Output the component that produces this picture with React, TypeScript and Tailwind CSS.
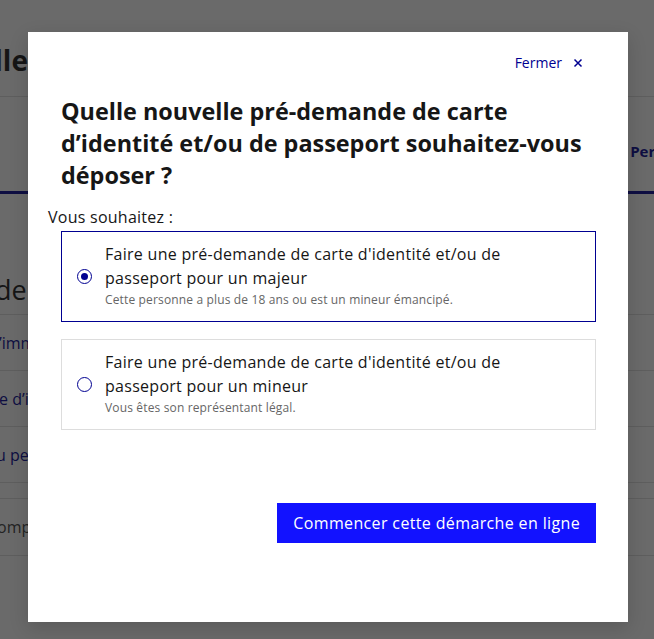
import React from "react";

const font = { fontFamily: '"Open Sans", "Lato", sans-serif' };

function Radio({ checked }: { checked: boolean }) {
  return (
    <span className="flex h-[15px] w-[15px] shrink-0 items-center justify-center rounded-full border border-[#000091] bg-white">
      {checked && <span className="h-[7px] w-[7px] rounded-full bg-[#000091]" />}
    </span>
  );
}

function Option({
  checked,
  line1,
  line2,
  hint,
}: {
  checked: boolean;
  line1: string;
  line2: string;
  hint: string;
}) {
  return (
    <div
      className={`flex items-center gap-[13px] border pl-[15px] pr-4 pt-[10px] pb-[11px] ${
        checked ? "border-[#000091]" : "border-[#dddddd]"
      }`}
    >
      <Radio checked={checked} />
      <div className="flex flex-col">
        <span className="whitespace-nowrap text-[16px] leading-[24px] tracking-[0.28px] text-[#161616]">
          {line1}
          <br />
          {line2}
        </span>
        <span className="whitespace-nowrap text-[12px] leading-[20px] tracking-[0.15px] text-[#666666]">{hint}</span>
      </div>
    </div>
  );
}

export default function App() {
  return (
    <div className="relative h-[639px] w-[654px] overflow-hidden bg-white" style={font}>
      {/* page behind */}
      <div className="flex flex-col">
        <div className="flex h-[97px] items-center border-b border-[#dddddd] pt-[24px]">
          <span className="ml-[-74px] text-[28px] font-bold text-[#161616]">Famille</span>
        </div>
        <div className="flex h-[97px] items-center justify-end border-b-[3px] border-[#000091] pt-[14px]">
          <span className="mr-[-54px] text-[15px] font-bold text-[#000091]">Personnes</span>
        </div>
        <div className="flex h-[120px] items-end pb-[4px]">
          <span className="ml-[-29px] whitespace-nowrap text-[27px] font-medium text-[#161616]">Aide</span>
        </div>
        <div className="flex h-[57px] items-center border-y border-[#dddddd]">
          <span className="ml-[-1px] whitespace-nowrap text-[16px] text-[#000091]">’immatriculation</span>
        </div>
        <div className="flex h-[56px] items-center border-b border-[#dddddd]">
          <span className="ml-[-1px] whitespace-nowrap text-[16px] text-[#000091]">e d’identité</span>
        </div>
        <div className="flex h-[56px] items-center border-b border-[#dddddd]">
          <span className="ml-[-4px] whitespace-nowrap text-[16px] text-[#000091]">u permis</span>
        </div>
        <div className="h-[16px] border-b border-[#dddddd]" />
        <div className="flex h-[57px] items-center border-b border-[#dddddd]">
          <span className="ml-[-3px] whitespace-nowrap text-[16px] text-[#3a3a3a]">ompte</span>
        </div>
      </div>

      {/* overlay */}
      <div className="absolute inset-0 flex justify-center bg-[rgba(22,22,22,0.64)] pt-[32px]">
        <div className="ml-[2px] flex h-[590px] w-[600px] flex-col bg-white shadow-[0_6px_18px_rgba(0,0,0,0.16)]">
          <div className="flex justify-end pr-[44px] pt-[22px]">
            <button className="flex items-center gap-[10px] text-[14px] font-medium leading-[18px] text-[#000091]">
              Fermer
              <svg width="12" height="12" viewBox="0 0 12 12" fill="none">
                <path d="M2.5 2.5 L9.5 9.5 M9.5 2.5 L2.5 9.5" stroke="#000091" strokeWidth="1.5" />
              </svg>
            </button>
          </div>
          <h1 className="mt-[23px] whitespace-nowrap px-[33px] text-[23.4px] font-bold leading-[32px] text-[#161616]">
            Quelle nouvelle pré-demande de carte
            <br />
            d’identité et/ou de passeport souhaitez-vous
            <br />
            déposer ?
          </h1>
          <div className="mt-[14px] px-[20px] text-[16px] leading-[24px] tracking-[0.25px] text-[#161616]">Vous souhaitez :</div>
          <div className="mt-[2px] flex flex-col gap-[17px] pl-[33px] pr-[32px]">
            <Option
              checked
              line1="Faire une pré-demande de carte d'identité et/ou de"
              line2="passeport pour un majeur"
              hint="Cette personne a plus de 18 ans ou est un mineur émancipé."
            />
            <Option
              checked={false}
              line1="Faire une pré-demande de carte d'identité et/ou de"
              line2="passeport pour un mineur"
              hint="Vous êtes son représentant légal."
            />
          </div>
          <div className="mt-[73px] flex justify-end pr-[32px]">
            <button className="h-[40px] bg-[#1212ff] px-[16px] text-[16px] font-medium tracking-[0.36px] text-white">
              Commencer cette démarche en ligne
            </button>
          </div>
        </div>
      </div>
    </div>
  );
}
